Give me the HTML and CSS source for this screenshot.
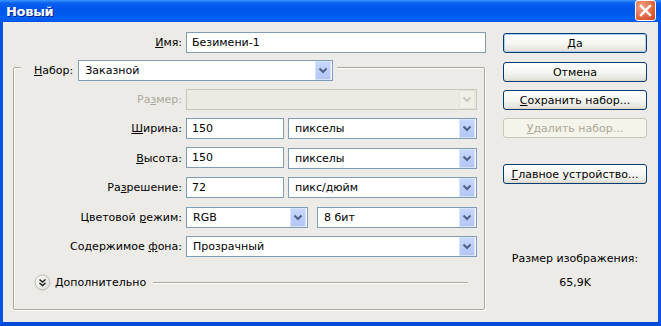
FILE: index.html
```html
<!DOCTYPE html>
<html lang="ru">
<head>
    <meta charset="UTF-8">
    <title>Новый</title>
    <link rel="stylesheet" href="styles.css">
</head>
<body>

<div class="window">
    <div class="titlebar">
        <span class="title">Новый</span>
        <span class="close-btn">
            <svg width="13" height="13" viewBox="0 0 13 13"><path d="M2 2 L11 11 M11 2 L2 11" stroke="#fff" stroke-width="2.4" stroke-linecap="square"/></svg>
        </span>
    </div>

    <div class="client">
        <!-- Левая часть: имя и параметры -->
        <div class="left-col">
            <div class="name-row">
                <label class="lbl"><u>И</u>мя:</label>
                <input type="text" class="field name-field" value="Безимени-1">
            </div>

            <div class="group">
                <div class="group-head">
                    <label class="head-lbl"><u>Н</u>абор:</label>
                    <div class="combo preset-combo">
                        <span class="combo-text">Заказной</span>
                        <span class="combo-btn"><svg width="16" height="19" viewBox="0 0 16 19"><path d="M4.5 7.5 L8 11 L11.5 7.5" fill="none" stroke="#4d6185" stroke-width="2"/></svg></span>
                    </div>
                </div>

                <div class="rows">
                    <div class="row">
                        <label class="lbl disabled">Ра<u>з</u>мер:</label>
                        <div class="combo full disabled-combo">
                            <span class="combo-text"></span>
                            <span class="combo-btn"><svg width="16" height="19" viewBox="0 0 16 19"><path d="M4.5 7.5 L8 11 L11.5 7.5" fill="none" stroke="#c9c7ba" stroke-width="2"/></svg></span>
                        </div>
                    </div>
                    <div class="row">
                        <label class="lbl"><u>Ш</u>ирина:</label>
                        <input type="text" class="field num-field" value="150">
                        <div class="combo unit-combo">
                            <span class="combo-text">пикселы</span>
                            <span class="combo-btn"><svg width="16" height="19" viewBox="0 0 16 19"><path d="M4.5 7.5 L8 11 L11.5 7.5" fill="none" stroke="#4d6185" stroke-width="2"/></svg></span>
                        </div>
                    </div>
                    <div class="row">
                        <label class="lbl"><u>В</u>ысота:</label>
                        <input type="text" class="field num-field" value="150">
                        <div class="combo unit-combo">
                            <span class="combo-text">пикселы</span>
                            <span class="combo-btn"><svg width="16" height="19" viewBox="0 0 16 19"><path d="M4.5 7.5 L8 11 L11.5 7.5" fill="none" stroke="#4d6185" stroke-width="2"/></svg></span>
                        </div>
                    </div>
                    <div class="row">
                        <label class="lbl">Ра<u>з</u>решение:</label>
                        <input type="text" class="field num-field" value="72">
                        <div class="combo unit-combo">
                            <span class="combo-text">пикс/дюйм</span>
                            <span class="combo-btn"><svg width="16" height="19" viewBox="0 0 16 19"><path d="M4.5 7.5 L8 11 L11.5 7.5" fill="none" stroke="#4d6185" stroke-width="2"/></svg></span>
                        </div>
                    </div>
                    <div class="row">
                        <label class="lbl">Цветовой <u>р</u>ежим:</label>
                        <div class="combo mode-combo">
                            <span class="combo-text">RGB</span>
                            <span class="combo-btn"><svg width="16" height="19" viewBox="0 0 16 19"><path d="M4.5 7.5 L8 11 L11.5 7.5" fill="none" stroke="#4d6185" stroke-width="2"/></svg></span>
                        </div>
                        <div class="combo bits-combo">
                            <span class="combo-text">8 бит</span>
                            <span class="combo-btn"><svg width="16" height="19" viewBox="0 0 16 19"><path d="M4.5 7.5 L8 11 L11.5 7.5" fill="none" stroke="#4d6185" stroke-width="2"/></svg></span>
                        </div>
                    </div>
                    <div class="row">
                        <label class="lbl">Содержимое <u>ф</u>она:</label>
                        <div class="combo full">
                            <span class="combo-text">Прозрачный</span>
                            <span class="combo-btn"><svg width="16" height="19" viewBox="0 0 16 19"><path d="M4.5 7.5 L8 11 L11.5 7.5" fill="none" stroke="#4d6185" stroke-width="2"/></svg></span>
                        </div>
                    </div>
                </div>

                <div class="advanced">
                    <svg class="adv-icon" width="17" height="17" viewBox="0 0 17 17">
                        <defs>
                            <linearGradient id="advfill" x1="0" y1="0" x2="1" y2="1">
                                <stop offset="0" stop-color="#ffffff"/>
                                <stop offset="1" stop-color="#dcdcd4"/>
                            </linearGradient>
                        </defs>
                        <circle cx="8.5" cy="8.5" r="7.5" fill="url(#advfill)" stroke="#b8b8ae"/>
                        <path d="M5.5 5.5 L8.5 8 L11.5 5.5 M5.5 9 L8.5 11.5 L11.5 9" fill="none" stroke="#222" stroke-width="1.6"/>
                    </svg>
                    <span class="adv-text">Дополнительно</span>
                    <span class="adv-line"></span>
                </div>
            </div>
        </div>

        <!-- Правая часть: кнопки -->
        <div class="right-col">
            <button class="btn default-btn">Да</button>
            <button class="btn">Отмена</button>
            <button class="btn"><u>С</u>охранить набор...</button>
            <button class="btn" disabled><u>У</u>далить набор...</button>
            <button class="btn gap-btn"><u>Г</u>лавное устройство...</button>

            <div class="size-info">
                <div>Размер изображения:</div>
                <div class="size-value">65,9K</div>
            </div>
        </div>
    </div>
</div>

</body>
</html>
```

FILE: styles.css
```css
body {
    margin: 0;
    padding: 0;
    font-family: "DejaVu Sans", sans-serif;
    font-size: 11px;
    color: #000;
}

.window {
    width: 661px;
    height: 326px;
    box-sizing: border-box;
    background-color: #ecebe8;
    border-left: 3px solid #0055e5;
    border-right: 3px solid #0055e5;
    border-bottom: 4px solid #0049d8;
    display: flex;
    flex-direction: column;
}

.titlebar {
    height: 22px;
    margin: 0 -3px;
    padding: 0 5px 0 6px;
    display: flex;
    align-items: center;
    justify-content: space-between;
    background: linear-gradient(#3d95ff 0, #0a62f0 3px, #0056ea 8px, #0058ee 14px, #0062f7 18px, #0054e3 22px);
}

.title {
    color: #fff;
    font-weight: bold;
    font-size: 13px;
    text-shadow: 1px 1px 0 #0a1e8a;
    letter-spacing: -0.3px;
}

.close-btn {
    width: 19px;
    height: 19px;
    margin-top: -2px;
    border: 1px solid #fff;
    border-radius: 3px;
    background: radial-gradient(circle at 30% 30%, #f2a58a 0, #e36a44 55%, #c8431c 100%);
    display: flex;
    align-items: center;
    justify-content: center;
}

.client {
    flex: 1;
    display: flex;
    padding: 10px 0 0 10px;
}

.left-col {
    width: 473px;
}

.name-row {
    display: flex;
    align-items: center;
}

.lbl {
    width: 168px;
    margin-right: 4px;
    text-align: right;
    white-space: nowrap;
}

.name-row .lbl {
    width: 169px;
}

.lbl.disabled {
    color: #aca899;
}

.field {
    box-sizing: border-box;
    height: 21px;
    border: 1px solid #7f9db9;
    padding: 0 5px;
    font-family: inherit;
    font-size: 11px;
    background-color: #fff;
    outline: none;
}

.name-field {
    width: 300px;
}

.num-field {
    width: 98px;
    margin-right: 4px;
    margin-top: -1px;
}

/* групповая рамка */
.group {
    box-sizing: border-box;
    width: 472px;
    height: 243px;
    margin-top: 14px;
    border: 1px solid #aca899;
    border-radius: 2px;
    box-shadow: inset 1px 1px 0 #fff, 1px 1px 0 #fff;
}

.group-head {
    display: flex;
    align-items: center;
    width: fit-content;
    margin: -8px 0 0 7px;
    padding: 0 4px 0 13px;
    background-color: #ecebe8;
}

.head-lbl {
    margin-right: 5px;
}

.rows {
    display: flex;
    flex-direction: column;
    gap: 8.4px;
    margin-top: 8px;
}

.row {
    display: flex;
    align-items: center;
    height: 21px;
}

.combo {
    box-sizing: border-box;
    height: 21px;
    border: 1px solid #7f9db9;
    background-color: #fff;
    display: flex;
    align-items: center;
    justify-content: space-between;
    padding-left: 6px;
}

.combo-text {
    white-space: nowrap;
}

.combo-btn {
    width: 16px;
    height: 19px;
    margin-right: 1px;
    background: linear-gradient(#c8d8fd, #bccefa 50%, #b2c6f6);
    border-radius: 1px;
    box-shadow: inset 0 0 0 1px #d8e4fd;
}

.combo-btn svg {
    display: block;
}

.preset-combo {
    width: 255px;
}

.full {
    width: 291px;
}

.unit-combo {
    width: 189px;
}

.mode-combo {
    width: 122px;
    margin-right: 9px;
}

.bits-combo {
    width: 160px;
}

.disabled-combo {
    border-color: #c9c7ba;
    background-color: #ebebe4;
}

.disabled-combo .combo-btn {
    background: #f0efe8;
    box-shadow: inset 0 0 0 1px #e2e1da;
}

.advanced {
    display: flex;
    align-items: center;
    margin: 17px 16px 0 20px;
}

.adv-text {
    margin-left: 4px;
}

.adv-line {
    flex: 1;
    height: 1px;
    margin-left: 7px;
    background-color: #aca899;
    box-shadow: 0 1px 0 #fff;
}

.right-col {
    width: 144px;
    margin-left: 17px;
    display: flex;
    flex-direction: column;
}

.btn {
    height: 20px;
    margin-top: 8px;
    padding: 0;
    border: 1px solid #003c74;
    border-radius: 3px;
    background: linear-gradient(#ffffff, #f5f5f1 55%, #e6e5de 88%, #d8d4c8);
    font-family: inherit;
    font-size: 11px;
    color: #000;
    cursor: pointer;
}

.default-btn {
    margin-top: 1px;
    box-shadow: inset 0 0 0 1px #b4cdf5;
}

.default-btn + .btn {
    margin-top: 9px;
}

.btn:disabled {
    border-color: #c9c7ba;
    background: #f5f4ea;
    color: #aca899;
}

.gap-btn {
    margin-top: 26px;
}

.size-info {
    margin-top: 68px;
    text-align: center;
    line-height: 13px;
}

.size-value {
    margin-top: 11px;
}
```
